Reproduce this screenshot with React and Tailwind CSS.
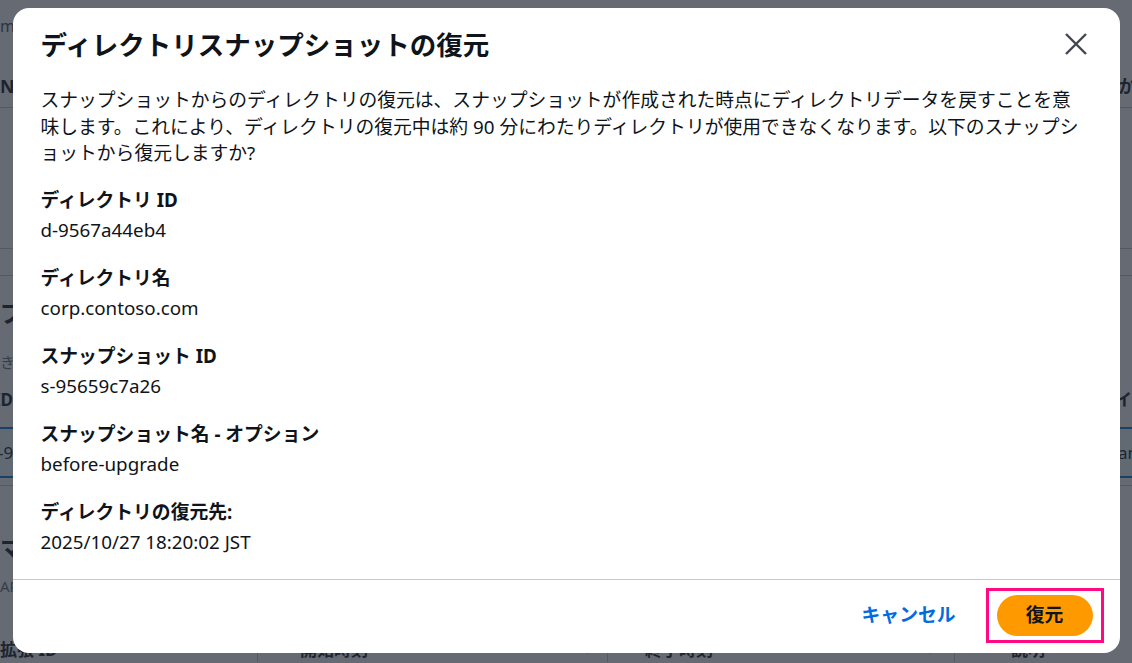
import React from "react";

const details = [
  { label: "ディレクトリ ID", value: "d-9567a44eb4" },
  { label: "ディレクトリ名", value: "corp.contoso.com" },
  { label: "スナップショット ID", value: "s-95659c7a26" },
  { label: "スナップショット名 - オプション", value: "before-upgrade" },
  { label: "ディレクトリの復元先:", value: "2025/10/27 18:20:02 JST" },
];

function CloseIcon() {
  return (
    <svg width="22" height="22" viewBox="0 0 22 22" fill="none" stroke="#424650" strokeWidth="2.4">
      <path d="M1 1L21 21M21 1L1 21" />
    </svg>
  );
}

// 背景のページ (モーダルの裏側、端だけ見える)
function BackgroundPage() {
  return (
    <div className="flex h-[663px] flex-col bg-white text-[#0f141a]">
      <div className="h-[111px] border-b border-[#c6c6cd]">
        <div className="pt-[16px] text-[16px] leading-[20px] text-[#414d5c]">mazon Directory Service</div>
        <div className="mt-[38px] flex justify-between text-[18px] font-bold leading-[24px]">
          <span>Name</span>
          <span className="-mr-[4px]">アクションか</span>
        </div>
      </div>
      <div className="h-[145px] border-b border-[#c6c6cd]" />
      <div className="h-[28px] border-b border-[#c6c6cd]" />
      <div className="pt-[22px] text-[24px] font-bold leading-[30px]">プ</div>
      <div className="mt-[24px] text-[15px] leading-[20px] text-[#656871]">き</div>
      <div className="flex h-[57px] items-center justify-between text-[17px] font-bold">
        <span className="-ml-[6px]">ID</span>
        <span>イ</span>
      </div>
      <div className="flex h-[52px] items-center justify-between border-y-2 border-[#0972d3] bg-[#f0fbff] text-[17px]">
        <span className="-ml-[2px]">-95659</span>
        <span className="-mr-[6px]">an</span>
      </div>
      <div className="h-[8px] border-b border-[#c6c6cd]" />
      <div className="pt-[48px] text-[24px] font-bold leading-[30px]">マ</div>
      <div className="mt-[12px] text-[15px] leading-[20px] text-[#656871]">AP</div>
      <div className="mt-[40px] flex h-[28px] items-center text-[17px] font-bold">
        <div className="flex w-[258px] items-center justify-between border-r border-[#c6c6cd] pr-[10px]">
          <span>拡張 ID</span>
          <span className="text-[12px]">▲</span>
        </div>
        <div className="flex w-[350px] items-center justify-between border-r border-[#c6c6cd] pl-[42px] pr-[14px]">
          <span>開始時刻</span>
          <span className="text-[12px]">▼</span>
        </div>
        <div className="flex w-[347px] items-center justify-between border-r border-[#c6c6cd] pl-[37px] pr-[18px]">
          <span>終了時刻</span>
          <span className="text-[12px]">▼</span>
        </div>
        <div className="pl-[56px]">説明</div>
      </div>
    </div>
  );
}

export default function App() {
  return (
    <div className="relative h-[663px] w-[1132px] overflow-hidden font-['Noto_Sans','Noto_Sans_CJK_JP',sans-serif]">
      <BackgroundPage />

      <div className="absolute inset-0 flex justify-center bg-[#232b37]/70 pt-[8px]">
        <div className="h-fit w-[1107px] rounded-[16px] bg-white text-[#0f141a]">
          <div className="flex items-start justify-between px-[28px] pt-[20px]">
            <h2 className="text-[26.5px] font-bold leading-[34px]">ディレクトリスナップショットの復元</h2>
            <button type="button" className="flex h-[32px] w-[32px] items-center justify-center">
              <CloseIcon />
            </button>
          </div>

          <div className="px-[28px] pb-[23px]">
            <p className="mt-[25px] pr-[2px] text-[18.8px] leading-[26.5px]">
              スナップショットからのディレクトリの復元は、スナップショットが作成された時点にディレクトリデータを戻すことを意味します。これにより、ディレクトリの復元中は約 90 分にわたりディレクトリが使用できなくなります。以下のスナップショットから復元しますか?
            </p>

            <div className="mt-[20px] flex flex-col gap-[21px]">
              {details.map((item) => (
                <div key={item.label} className="text-[18.8px] leading-[26.5px]">
                  <div className="font-bold">{item.label}</div>
                  <div className="mt-[4px]">{item.value}</div>
                </div>
              ))}
            </div>
          </div>

          <div className="flex items-center justify-end gap-[30px] border-t border-[#c6c6cd] pb-[10px] pr-[16px] pt-[8px]">
            <button type="button" className="text-[18.8px] font-bold leading-[26px] text-[#006ce0]">
              キャンセル
            </button>
            <div className="border-[3px] border-[#ff0a84] px-[8px] py-[4px]">
              <button
                type="button"
                className="flex h-[41px] w-[96px] items-center justify-center rounded-full bg-[#ff9900] text-[18.8px] font-bold text-[#0f141a]"
              >
                復元
              </button>
            </div>
          </div>
        </div>
      </div>
    </div>
  );
}
